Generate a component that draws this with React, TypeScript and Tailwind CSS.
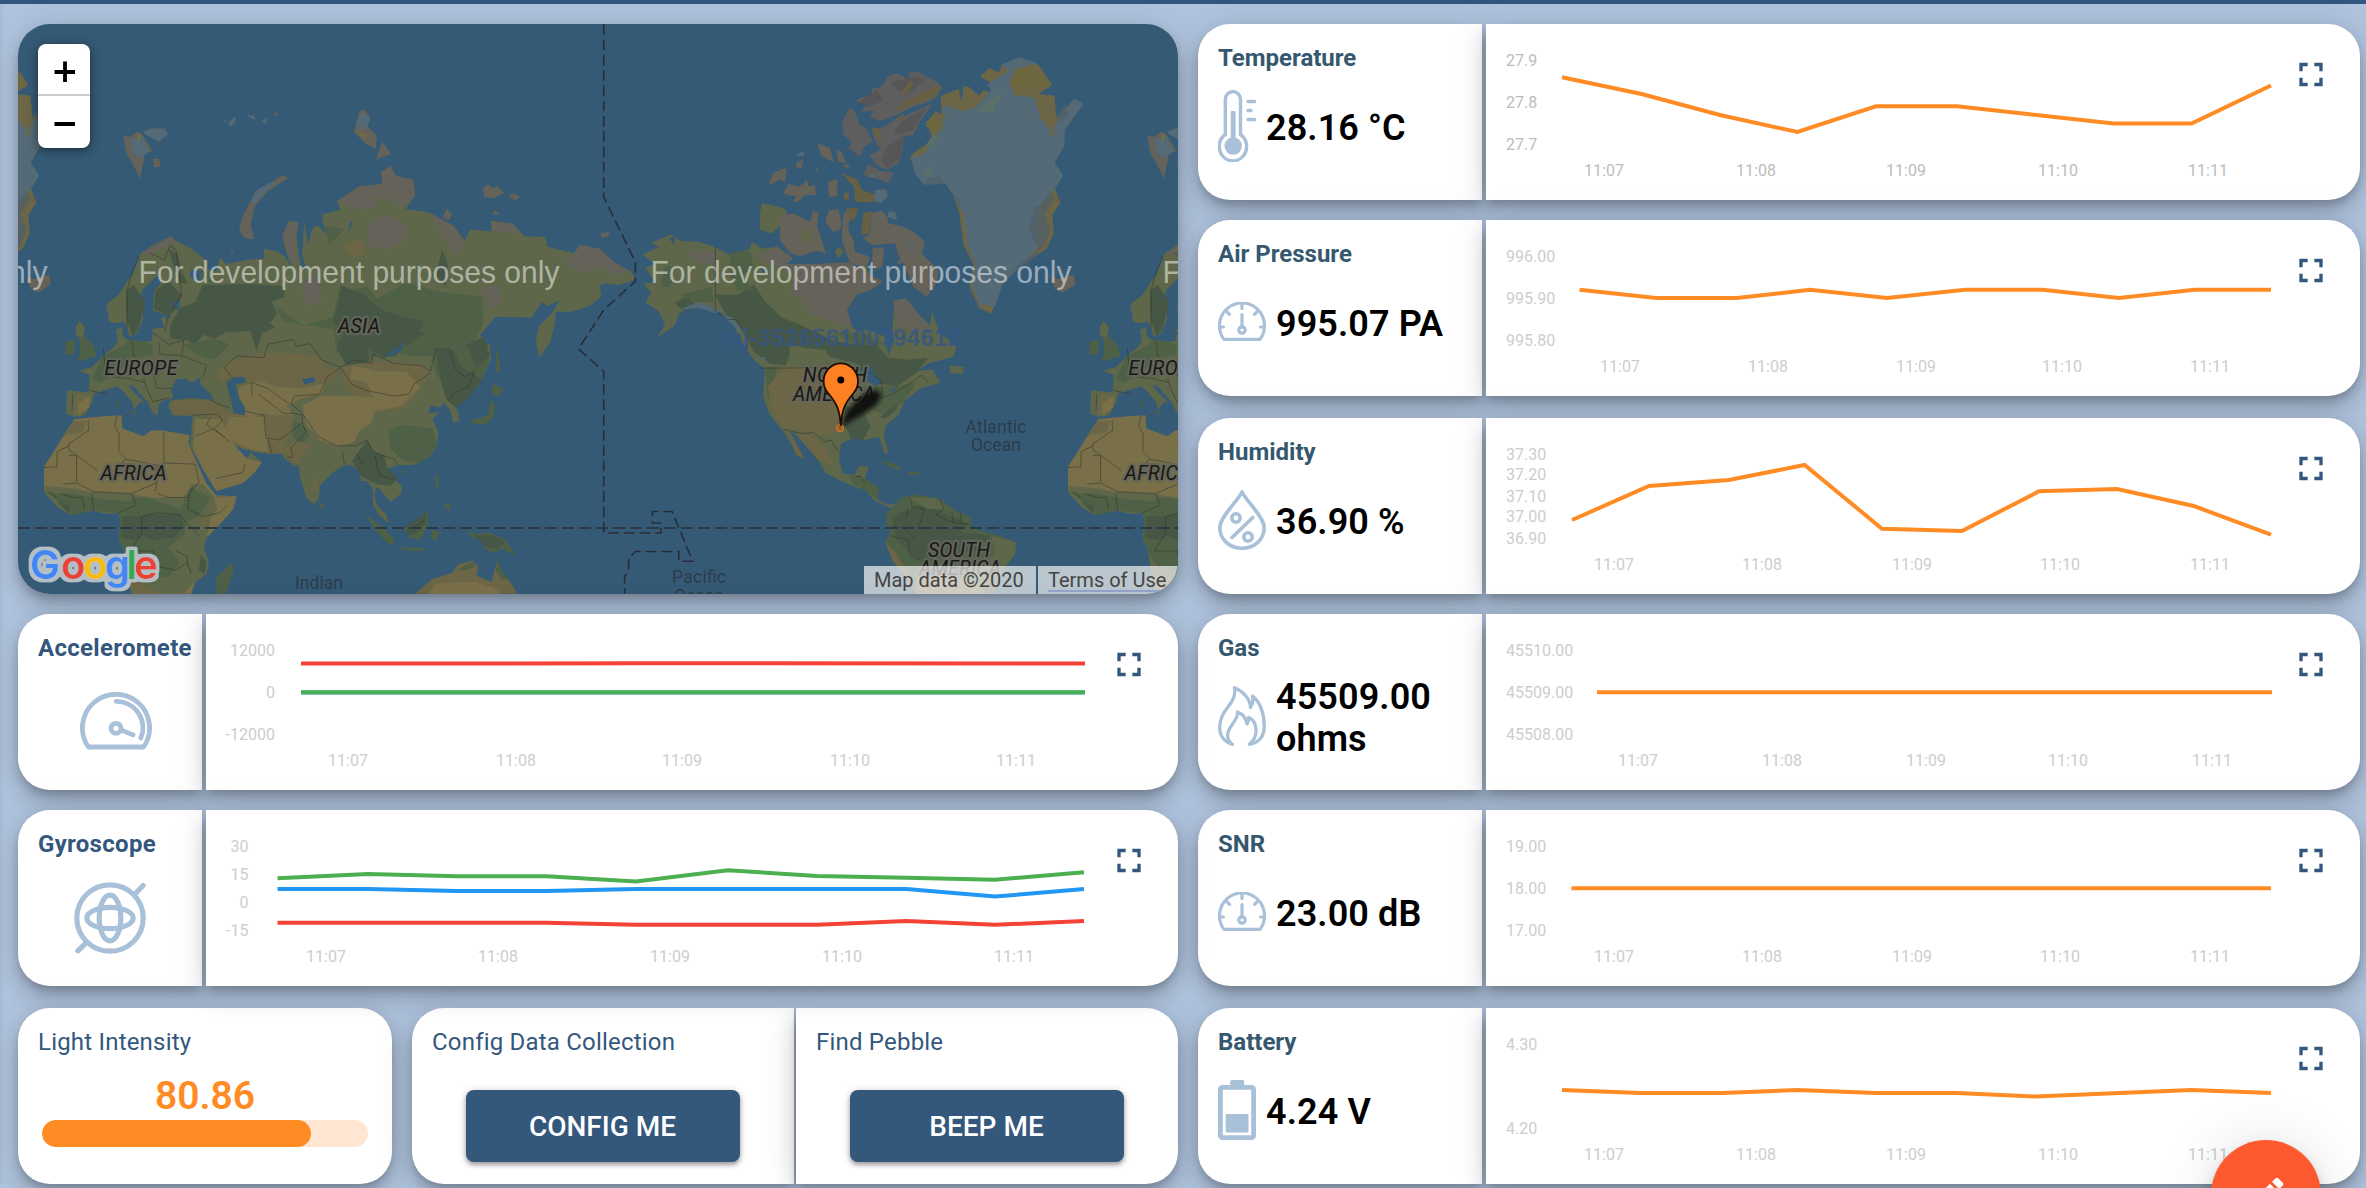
import React from "react";

const STEEL = "#a9c0d9";
const ORANGE = "#ff8b25";

const cardShadow =
  "shadow-[0_6px_10px_-2px_rgba(0,0,0,0.2),0_12px_20px_0_rgba(0,0,0,0.14),0_2px_36px_0_rgba(0,0,0,0.12)]";

/* ---------- icons ---------- */

function Thermometer() {
  return (
    <svg width="38" height="72" viewBox="0 0 38 72" fill="none" stroke={STEEL} strokeWidth="3.4" strokeLinecap="round">
      <path d="M7.3 44.5V9.6a7.6 8 0 0 1 15.2 0V44.5A13.7 14.4 0 1 1 7.3 44.5Z" />
      <rect x="12.8" y="21" width="4.8" height="30" rx="1" fill={STEEL} stroke="none" />
      <circle cx="15.2" cy="56" r="8.7" fill={STEEL} stroke="none" />
      <path d="M30 11.5H36.5M30 20.5H33M30 29.5H36.5" strokeWidth="3.4" />
    </svg>
  );
}

function Gauge() {
  return (
    <svg width="48" height="40" viewBox="0 0 48 40" fill="none" stroke={STEEL} strokeWidth="3.2" strokeLinecap="round" strokeLinejoin="round">
      <path d="M6 37.4A22.5 22.8 0 1 1 42 37.4Z" />
      <path d="M24 2.5V6.5M2.5 25H5.5M42.5 25H45.5M9 9.8L11.5 12.3M39 9.8L36.5 12.3M24 12.5V24" />
      <circle cx="24" cy="28" r="3.2" />
    </svg>
  );
}

function Drop() {
  return (
    <svg width="48" height="60" viewBox="0 0 48 60" fill="none" stroke={STEEL} strokeWidth="3.6" strokeLinecap="round" strokeLinejoin="round">
      <path d="M24 2C19 12 1.8 27 1.8 37.5C1.8 49.5 11.500 58.200 24 58.200S46.200 49.500 46.200 37.500C46.200 27 29 12 24 2Z" />
      <circle cx="18" cy="28" r="4.2" />
      <circle cx="30" cy="47" r="4.2" />
      <path d="M34.8 27.5L14 47.5" />
    </svg>
  );
}

function Flame() {
  return (
    <svg width="48" height="60" viewBox="0 0 48 60" fill="none" stroke={STEEL} strokeWidth="3.3" strokeLinecap="round" strokeLinejoin="round">
      <path d="M14.5 58.3C6 56 1.7 49.5 1.7 41.5C1.7 30 8 24 12.5 17.5C16.5 11.5 17.5 7 16.5 1.7C25 5 32 12.5 32.5 21.5C34.5 18.5 35.5 14.5 34.5 10C42 15.5 46.3 28 46.3 40C46.3 50 41 56.5 31.5 58.3C36.5 54 38.5 48.5 38 43C37.5 37.5 35 33 30.5 31.5C31 34 30.5 36 29 38C28 32 25 28 19.5 26C20.5 35 9.5 40 9.6 49.5C9.7 53 11.500 56.500 14.500 58.300Z" />
    </svg>
  );
}

function Battery() {
  return (
    <svg width="38" height="60" viewBox="0 0 38 60">
      <rect x="12.2" width="14" height="8" rx="1.5" fill={STEEL} />
      <rect x="2.4" y="7.4" width="33.2" height="50.2" rx="2" fill="none" stroke={STEEL} strokeWidth="4.8" />
      <rect x="7.7" y="34" width="22.8" height="18.5" rx="1" fill={STEEL} />
    </svg>
  );
}

function Speedometer() {
  return (
    <svg width="72" height="58" viewBox="0 0 72 58" fill="none" stroke={STEEL} strokeWidth="4.8" strokeLinecap="round" strokeLinejoin="round">
      <path d="M8.400 55A33.600 33.600 0 1 1 63.600 55Z" />
      <path d="M36.300 9.400A26.300 26.300 0 0 1 60.800 46M42 38.400L53 42.900" />
      <circle cx="36" cy="36.300" r="5" />
    </svg>
  );
}

function GyroIcon() {
  return (
    <svg width="72" height="72" viewBox="0 0 72 72" fill="none" stroke={STEEL} strokeWidth="5.2" strokeLinecap="round">
      <circle cx="36" cy="36" r="33.200" />
      <ellipse cx="36" cy="36" rx="10.800" ry="22.800" />
      <ellipse cx="36" cy="36" rx="23.200" ry="10.600" />
      <path d="M69 3.500L61 12M3.800 68.800L12.500 60.500" />
    </svg>
  );
}

function FullscreenButton() {
  return (
    <button className="absolute top-[30px] right-[29px] flex size-10 items-center justify-center">
      <svg width="41" height="41" viewBox="0 0 24 24" fill="#33577d">
        <path d="M7 14H5v5h5v-2H7v-3zm-2-4h2V7h3V5H5v5zm12 7h-3v2h5v-5h-2v3zM14 5v2h3v3h2V5h-5z" />
      </svg>
    </button>
  );
}

/* ---------- charts ---------- */

type Series = { color: string; points: string };
type Label = { text: string; y: number };

function Chart(props: {
  width: number;
  labels: Label[];
  labelX?: number;
  anchor?: "start" | "end";
  times: number[];
  series: Series[];
  dark?: boolean;
}) {
  const { width, labels, labelX = 20, anchor = "start", times, series, dark } = props;
  const fill = dark ? "#bcbcbc" : "#cdcdcd";
  return (
    <svg className="block" width={width} height="176" viewBox={`0 0 ${width} 176`} fontFamily="Roboto, sans-serif" fontSize="16">
      {labels.map((l) => (
        <text key={l.text} x={labelX} y={l.y} textAnchor={anchor} fill={fill}>
          {l.text}
        </text>
      ))}
      {times.map((x, i) => (
        <text key={x} x={x} y="152" textAnchor="middle" fill={fill}>
          {["11:07", "11:08", "11:09", "11:10", "11:11"][i]}
        </text>
      ))}
      {series.map((s) => (
        <polyline key={s.color} points={s.points} fill="none" stroke={s.color} strokeWidth="4" />
      ))}
    </svg>
  );
}

const three = (a: string, b: string, c: string): Label[] => [
  { text: a, y: 42 },
  { text: b, y: 84 },
  { text: c, y: 126 },
];

/* ---------- cards ---------- */

function SensorCard(props: { title: string; value: string; icon: React.ReactNode; chart: React.ReactNode; className?: string }) {
  return (
    <section className={`flex h-[176px] shrink-0 gap-1 ${props.className ?? ""}`}>
      <div className={`w-[284px] rounded-l-[32px] bg-white pt-5 pl-5 ${cardShadow}`}>
        <h2 className="text-[24px] leading-7 font-bold text-[#35586f]">{props.title}</h2>
        <div className="mt-3 flex h-[84px] items-center gap-[10px]">
          <div className="shrink-0">{props.icon}</div>
          <p className="pt-[3px] text-[36px] leading-[42px] font-semibold tracking-[0.1px] text-black">{props.value}</p>
        </div>
      </div>
      <div className={`relative w-[874px] rounded-r-[32px] bg-white ${cardShadow}`}>
        {props.chart}
        <FullscreenButton />
      </div>
    </section>
  );
}

function MotionCard(props: { title: string; icon: React.ReactNode; chart: React.ReactNode; className?: string }) {
  return (
    <section className={`flex h-[176px] shrink-0 gap-1 ${props.className ?? ""}`}>
      <div className={`w-[184px] rounded-l-[32px] bg-white pt-5 pl-5 ${cardShadow}`}>
        <h2 className="w-[153px] overflow-hidden text-[24px] leading-7 font-bold tracking-[0.3px] text-[#33577d]">{props.title}</h2>
        {props.icon}
      </div>
      <div className={`relative w-[972px] rounded-r-[32px] bg-white ${cardShadow}`}>
        {props.chart}
        <FullscreenButton />
      </div>
    </section>
  );
}

function ActionCard(props: { title: string; action: string; className: string }) {
  return (
    <div className={`w-[382px] bg-white pt-5 ${cardShadow} ${props.className}`}>
      <h2 className="pl-5 text-[24px] leading-7 tracking-[0.2px] text-[#33577d]">{props.title}</h2>
      <button className="mt-[34px] ml-[54px] flex h-[72px] w-[274px] items-center justify-center rounded-lg bg-[#34577c] pt-0.5 pr-px text-[28px] font-medium text-white shadow-[0_3px_4px_rgba(0,0,0,0.3),0_1px_8px_rgba(0,0,0,0.18)]">
        {props.action}
      </button>
    </div>
  );
}

/* ---------- map ---------- */

const C = {
  ocean: "#355a75",
  land: "#5e6749",
  mid: "#4e6045",
  forest: "#465745",
  desert: "#79704a",
  steppe: "#6c6647",
  tundra: "#646259",
  ice: "#546a76",
};

/* Europe, Asia and Africa */
function OldWorld() {
  return (
    <g>
      <path
        fill={C.land}
        d="M445 618L465 632L500 650L545 685L540 710L500 705L495 722L520 738L527 700L565 710L575 672L590 690L640 680L690 675L690 650L720 655L745 670L765 705L745 650L738 615L755 578L780 580L775 610L780 660L787 695L800 705L790 665L795 575L800 610L806 640L815 600L830 588L860 620L845 590L842 560L890 548L880 525L940 487L1000 480L995 450L1020 434L1035 460L1080 470L1085 510L1060 547L1120 555L1185 590L1215 630L1228 600L1285 605L1282 577L1340 585L1370 617L1425 620L1430 645L1500 662L1515 640L1568 650L1603 685L1650 710L1660 730L1619 745L1580 740L1567 745L1572 775L1540 800L1516 808L1490 815L1452 815L1450 840L1440 890L1410 935L1400 890L1410 850L1440 822L1462 785L1430 800L1415 790L1390 830L1295 828L1255 875L1270 905L1280 898L1283 940L1260 990L1230 1030L1210 1035L1182 1050L1198 1078L1200 1100L1185 1105L1175 1070L1160 1052L1150 1065L1125 1060L1120 1080L1150 1077L1130 1095L1145 1130L1143 1165L1120 1195L1080 1215L1040 1215L1015 1225L1025 1245L1050 1270L1048 1290L1020 1312L1000 1287L985 1272L978 1290L985 1320L1010 1345L1015 1368L990 1345L975 1320L975 1280L960 1258L945 1258L935 1225L915 1215L895 1218L870 1235L837 1268L832 1305L820 1318L800 1300L785 1250L780 1215L770 1218L745 1200L735 1185L700 1185L660 1180L612 1160L605 1145L590 1150L600 1170L620 1190L645 1198L655 1182L685 1208L665 1235L635 1262L565 1283L555 1265L530 1225L510 1190L497 1165L500 1135L503 1088L450 1085L440 1060L445 1048L500 1040L560 1045L545 1030L520 1010L525 985L500 1000L485 990L460 995L447 1020L455 1038L425 1048L415 1055L412 1085L400 1080L385 1050L350 1010L335 1005L345 1020L378 1052L365 1052L350 1070L345 1050L320 1020L305 1010L270 1020L245 1030L240 1055L220 1085L195 1090L173 1080L175 1020L225 1025L232 1020L235 980L205 968L240 960L270 930L300 905L308 890L303 862L318 855L322 880L335 890L395 893L400 870L398 860L430 855L420 830L445 825L400 812L403 760L420 740L412 720L395 735L370 760L368 800L375 830L360 870L340 880L325 840L305 845L285 840L278 795L310 770L350 710L365 665L400 640Z"
      />
      {/* northern forest */}
      <path fill={C.forest} d="M445 850L470 805L510 790L530 745L640 742L740 748L745 775L710 790L725 820L705 845L720 855L685 870L670 918L655 865L590 868L560 885L530 875L510 900L490 890L445 885ZM405 760L440 735L475 770L465 805L440 825L403 808ZM440 650L465 665L475 710L490 740L470 740L455 700ZM330 760L350 745L380 790L360 865L345 878L330 830Z" />
      <path fill={C.mid} d="M885 760L960 750L985 780L1060 740L1160 765L1260 775L1262 850L1240 890L1280 940L1250 1010L1200 1055L1180 1015L1140 980L1130 930L1070 930L1010 915L960 945L880 920L870 860L740 840L720 800L790 850L870 830Z" />
      <path fill={C.forest} d="M890 745L950 770L1000 810L1060 830L1110 840L1090 870L1060 880L1035 930L1000 935L960 905L965 945L905 955L880 910L900 870L870 840L885 790ZM1140 915L1185 915L1205 960L1260 990L1225 1040L1190 1065L1165 1040L1150 990ZM1220 900L1265 880L1280 930L1245 960ZM1140 720L1155 650L1170 690L1165 750ZM975 1180L1005 1190L1010 1220L1040 1250L1020 1270L985 1265L945 1245L920 1205L960 1150ZM990 860L1060 850L1110 870L1060 905Z" />
      <path fill={C.mid} d="M270 930L330 900L335 885L400 900L395 930L340 935L310 970L260 1000L240 990ZM480 900L560 885L600 900L560 940L520 930ZM1015 1125L1050 1110L1130 1120L1143 1165L1100 1210L1050 1200L1020 1170ZM765 1095L800 1120L810 1140L780 1165L765 1140ZM520 735L530 690L560 740ZM1150 800L1250 790L1220 860L1160 850ZM640 1120L650 1130L640 1140ZM850 590L900 600L860 640Z" />
      {/* tundra */}
      <path fill={C.tundra} d="M880 525L940 487L1000 480L995 450L1020 434L1035 460L1080 470L1085 510L1050 545L1020 520L985 515L985 540L940 550ZM738 615L755 578L780 580L770 640L780 700L755 670ZM960 590L1010 560L1065 590L1060 630L1010 655L960 640ZM1120 555L1185 590L1215 640L1190 670L1160 620ZM1285 577L1340 585L1360 610L1290 605ZM1470 680L1500 662L1515 640L1568 650L1603 685L1650 710L1620 720L1560 700L1520 715ZM370 660L445 618L465 635L420 650L390 670ZM785 740L830 720L840 790L800 800ZM1255 750L1300 745L1310 790L1280 810Z" />
      {/* steppe and desert */}
      <path fill={C.steppe} d="M565 975L600 940L640 935L700 920L770 925L830 930L850 960L890 965L860 1000L790 1010L720 1035L700 1010L650 1000L600 985L575 1000ZM890 960L990 945L1100 950L1130 975L1100 1010L1085 1035L1060 1065L1000 1075L960 1060L900 1010ZM450 1045L530 1045L580 1060L610 1100L580 1100L500 1080L455 1085ZM200 1030L235 1035L225 1080L195 1085ZM900 635L945 628L960 655L935 675L905 660ZM500 1110L610 1080L700 1080L770 1090L740 1185L700 1185L640 1175L580 1150L510 1160ZM740 1180L770 1150L810 1165L775 1215ZM815 1245L830 1250L822 1290Z" />
      <path fill={C.desert} d="M625 1010L680 995L720 1010L780 1015L850 1000L840 1030L790 1040L750 1060L765 1085L720 1085L690 1080L650 1095L620 1060ZM790 1060L840 1035L930 1035L975 1040L960 1000L915 990L920 955L985 970L1060 970L1100 1010L1050 1060L980 1075L970 1105L940 1125L925 1155L880 1165L835 1150L800 1110ZM510 1095L575 1095L590 1120L600 1135L610 1160L645 1198L685 1208L665 1235L635 1262L565 1283L530 1225L505 1175ZM600 1090L690 1090L700 1180L660 1175L610 1155L590 1115ZM205 1055L235 1035L232 1065L205 1085Z" />
      {/* inland waters */}
      <path fill={C.ocean} d="M592 1000L610 985L640 985L640 1000L615 1005L625 1040L640 1065L640 1085L612 1080L605 1055ZM447 1020L460 992L485 990L500 1005L520 1000L555 1035L530 1045L490 1035L455 1042ZM790 992L820 985L825 998L795 1004ZM1008 925L1045 905L1052 885L1050 915L1015 932ZM448 792L472 785L465 812ZM915 578L922 580L908 615ZM430 835L448 820L445 830Z" />
      {/* Africa */}
      <path
        fill={C.desert}
        d="M195 1095L270 1088L318 1085L320 1120L375 1140L395 1125L425 1125L495 1137L493 1160L515 1210L540 1265L565 1295L618 1297L610 1330L575 1370L540 1405L532 1430L545 1470L540 1500L510 1520L500 1552L345 1552L335 1520L330 1470L325 1440L310 1410L315 1360L310 1340L280 1342L240 1335L185 1345L150 1325L115 1285L115 1220L150 1165L165 1140Z"
      />
      <path fill={C.land} d="M115 1270L180 1275L240 1285L330 1290L400 1300L480 1300L500 1265L530 1265L560 1300L585 1310L550 1355L540 1405L532 1430L545 1470L540 1500L510 1520L480 1552L400 1552L335 1520L325 1440L310 1410L315 1360L310 1340L280 1342L240 1335L185 1345L150 1325L115 1285Z" />
      <path fill={C.mid} d="M130 1290L190 1290L260 1305L330 1310L360 1300L400 1305L470 1330L500 1275L550 1300L520 1350L490 1360L480 1400L440 1430L470 1470L440 1510L380 1500L340 1470L325 1440L310 1410L315 1360L310 1340L240 1335L185 1345Z" />
      <path fill={C.forest} d="M320 1350L370 1350L400 1345L470 1345L480 1375L455 1405L400 1412L375 1400L350 1412L318 1405ZM150 1310L180 1320L180 1342ZM525 1450L540 1470L535 1500L520 1490Z" />
      <path fill={C.steppe} d="M345 1552L330 1510L380 1530L420 1552ZM165 1140L195 1100L225 1100L215 1130ZM525 1350L550 1345L520 1400ZM565 1295L618 1297L600 1325L540 1340L575 1310Z" />
      <path fill={C.desert} d="M560 1302L618 1297L605 1330L570 1340Z" />
      {/* islands */}
      <path fill={C.mid} d="M608 1470L610 1495L590 1551L565 1551L565 1510L580 1495ZM205 882L222 878L245 905L252 930L205 945L210 915ZM170 895L195 885L195 925L172 928ZM1225 1100L1275 1085L1283 1045L1293 1058L1290 1090L1272 1108L1240 1108ZM1288 1003L1318 1018L1298 1037L1285 1025ZM1298 900L1304 935L1308 965L1296 978ZM1138 1240L1146 1242L1145 1275L1138 1270ZM1160 1318L1180 1318L1172 1337ZM1055 1380L1090 1362L1117 1333L1118 1370L1100 1410L1070 1405ZM953 1340L985 1368L1003 1378L1030 1412L1028 1424L1010 1418L980 1385ZM1035 1428L1070 1432L1112 1432L1105 1440L1060 1438ZM1130 1385L1152 1390L1140 1412L1125 1408ZM1218 1385L1240 1395L1280 1392L1320 1410L1335 1430L1350 1452L1310 1435L1290 1446L1265 1435L1265 1415L1235 1405ZM835 1312L848 1322L842 1330L833 1325ZM305 1045L312 1065L304 1062ZM335 1073L355 1078L352 1086ZM1210 1115L1218 1112L1214 1122ZM1050 1232L1065 1230L1058 1240Z" />
      <path fill={C.forest} d="M1060 1375L1115 1340L1110 1370L1090 1395L1065 1398ZM1240 1398L1285 1400L1320 1418L1300 1435L1270 1430Z" />
      <path fill={C.land} d="M208 838L222 855L218 880L200 880L198 855Z" />
      <path fill={C.tundra} d="M70 722L85 730L130 718L132 742L100 765L80 755ZM625 605L632 570L650 535L668 500L740 458L753 465L700 500L665 540L655 590L665 625L640 622ZM322 355L340 358L358 345L372 350L398 395L380 400L366 467L345 425L330 400ZM400 415L415 415L420 435L402 438ZM925 345L940 290L953 287L968 310L960 330L985 355L982 388L955 375ZM983 418L998 370L1022 402ZM1262 490L1275 482L1290 492L1298 485L1318 505L1290 518L1265 515ZM1328 512L1345 505L1360 515L1345 524ZM1158 565L1168 545L1180 560L1175 575L1160 572ZM1285 560L1295 548L1304 562ZM714 302L724 290L726 302ZM603 655L613 660L605 663Z" />
      <path fill={C.ice} d="M372 345L395 335L430 335L439 350L415 370L385 355ZM340 365L370 355L390 395L365 415L350 400ZM655 530L668 500L700 480L720 475L690 505L668 530ZM930 320L945 295L965 305L958 335L940 340ZM642 300L665 303L668 315ZM595 325L612 306L618 312L605 330ZM683 318L697 305L697 325ZM582 318L592 310L590 318Z" />
      <path fill="#77703f" d="M358 348L368 350L362 380ZM930 345L960 350L955 362Z" opacity="0.8" />
      {/* Australia */}
      <path fill={C.steppe} d="M1085 1552L1130 1513L1180 1498L1197 1475L1235 1465L1250 1480L1245 1505L1285 1520L1300 1463L1312 1495L1330 1515L1352 1552Z" />
      <path fill={C.desert} d="M1120 1552L1140 1525L1240 1520L1290 1535L1310 1552Z" />
      <path fill={C.mid} d="M1190 1490L1235 1467L1245 1480L1215 1490ZM1296 1490L1300 1463L1312 1495L1330 1515L1310 1515Z" />
      {/* borders */}
      <g fill="none" stroke="#35342f" strokeWidth="2.4" opacity="0.6" strokeLinejoin="round">
        <path d="M365 668L345 710L332 760L332 860M390 660L430 680L445 640L460 655L475 770L450 808M585 960L620 930L690 935L700 900L765 887L775 905L810 898L840 940L890 960L925 940L970 950L975 925L1030 950L1100 955L1125 970L1140 912L1175 912L1190 965L1215 985L1240 970L1225 1010L1190 1025L1170 1050M890 960L920 1005L955 1020L1030 1035L1070 1030L1080 1005L1125 975M585 960L605 985M890 960L855 985L835 1030L770 1035L760 1055L790 1080L830 1140L880 1165L930 1165L960 1150L975 1180L1000 1190L1030 1200L1040 1215M658 1035L658 1000L700 1015L720 1030L755 1055M675 1030L740 1080L765 1080L790 1085L790 1105L730 1150L700 1145L710 1185M640 1075L690 1085L695 1145M790 1105L800 1130L760 1170L765 1195L750 1195" />
        <path d="M270 910L275 960L295 985L340 990L380 1000M345 895L350 930L375 950L420 960M415 895L418 925L475 930L480 890L440 900L400 870M475 930L540 955L530 985M400 975L410 1015L450 1015M375 990L385 1020L400 1050L440 1040M232 1020L280 1030M190 1030L188 1075M440 825L430 870M550 1045L580 1060L600 1065M505 1085L570 1082L580 1100L560 1120L510 1140M550 1090L540 1110L590 1145M560 1120L600 1155M565 1250L635 1235L640 1215M895 1180L900 1215M930 1185L950 1215M980 1190L990 1240L1030 1255" />
        <path d="M230 1098L232 1125L180 1160L180 1175L255 1230M305 1088L300 1115L312 1135L310 1180L330 1200L300 1225M428 1130L428 1210L510 1213M328 1200L410 1215L412 1250L405 1285M180 1165L150 1180L148 1220L115 1222M180 1190L200 1190L200 1262L165 1265M200 1262L245 1285L345 1290L412 1260M345 1290L355 1320L310 1340M412 1290L440 1300L490 1300L505 1270M510 1213L520 1260L495 1290L490 1330L530 1350L575 1340L595 1320M370 1350L410 1340L470 1345L490 1370L520 1400M370 1350L370 1395L340 1440L400 1440L410 1480L460 1490L490 1470L500 1500M460 1440L490 1455L490 1480M160 1290L190 1300L215 1300L220 1330M240 1290L245 1335M125 1285L150 1300M1075 1380L1110 1360" />
      </g>
    </g>
  );
}

function Greenland() {
  return (
    <g>
      <path
        fill={C.steppe}
        d="M848 450L835 410L865 395L890 355L875 320L900 290L915 300L912 250L958 232L965 265L970 225L985 228L1010 250L1020 235L1045 245L1038 215L1012 200L1035 178L1060 190L1066 170L1110 150L1160 170L1195 222L1160 245L1200 250L1205 310L1250 258L1273 272L1225 340L1225 380L1200 425L1222 460L1200 490L1215 530L1195 560L1198 610L1180 650L1120 690L1070 740L1058 770L1040 820L1010 805L985 750L995 690L970 640L960 560L945 510L925 480L870 482Z"
      />
      <path
        fill={C.ice}
        d="M848 455L838 412L850 405L880 385L905 350L925 300L912 290L925 275L965 290L1000 280L1040 235L1030 220L1055 205L1085 185L1065 170L1110 150L1158 165L1100 180L1085 215L1100 250L1150 255L1165 310L1190 340L1215 305L1250 258L1273 272L1225 340L1225 380L1200 425L1222 460L1190 510L1160 540L1150 600L1160 640L1120 690L1070 740L1050 800L1010 795L990 740L1000 690L980 640L970 560L945 510L925 480L870 482Z"
      />
      <path fill="#6f683d" d="M1090 225L1108 180L1165 182L1190 222L1150 235L1120 228ZM835 408L870 380L880 390L860 408ZM872 330L895 305L920 325L912 340ZM1180 330L1190 350L1205 315L1200 345L1190 360Z" opacity="0.9" />
      <path fill="#5c7166" d="M1000 290L1075 235L1050 270L1045 290ZM862 462L890 432L885 455ZM875 380L895 350L905 362L885 385Z" />
      <path fill="#4f6069" d="M1160 540L1190 500L1200 520L1175 560L1190 600L1175 640L1130 690L1080 715L1160 650L1135 600L1150 540ZM945 505L965 550L960 520ZM870 482L880 465L910 460L925 480ZM1205 300L1230 270L1235 300L1215 320Z" opacity="0.7" />
    </g>
  );
}

/* Canadian arctic islands */
function ArcticIslands() {
  return (
    <g>
      <path fill="#5f5e5f" d="M225 183L245 172L272 165L278 145L305 140L325 108L352 100L385 118L388 97L415 95L435 108L470 125L486 140L470 170L440 188L400 200L350 225L300 243L270 232L280 212L245 215L262 190ZM187 250L200 215L212 202L225 215L240 255L258 265L278 305L255 318L240 350L205 325L215 305L190 285ZM300 265L380 225L458 190L420 245L400 285L370 290L368 330L355 370L320 390L290 375L268 345L300 330L280 290L275 262ZM250 405L265 372L300 392L342 398L325 430L300 418Z" />
      <path fill="#545456" d="M330 130L400 110L440 115L400 150L370 165ZM360 250L440 200L400 270L340 285ZM320 320L368 290L362 350L320 388L305 360ZM230 190L290 150L310 180L270 200Z" opacity="0.8" />
      <path fill="#686042" d="M340 215L380 180L430 160L470 135L484 148L460 172L400 195ZM362 160L390 120L400 130L385 155L370 168ZM335 245L372 220L365 240ZM275 262L300 268L305 305L285 290ZM185 400L232 418L245 450L290 465L280 487L225 485L222 440ZM200 505L236 505L225 535L195 550ZM250 520L275 513L268 580L243 585ZM192 458L208 458L205 482L192 478Z" />
      <path fill={C.tundra} d="M112 308L150 325L162 368L122 345ZM170 330L185 335L198 370L175 365ZM192 372L210 374L205 383L192 380ZM48 370L70 358L65 385L50 385ZM0 385L20 390L15 425L0 418ZM10 458L25 432L55 440L72 430L80 418L85 438L105 435L107 465L75 465L55 485L38 488L48 468L20 466ZM143 425L172 418L172 468L148 472ZM108 378L115 392L108 392ZM0 520L20 512L22 525L40 520L90 545L98 515L115 515L112 560L138 640L110 632L60 648L30 640L0 600ZM135 545L148 510L175 508L180 528L185 550L180 570L160 575ZM190 520L210 515L205 570L220 600L225 635L270 650L260 685L210 670L185 600ZM275 520L305 512L322 530L325 550L370 560L400 575L435 605L425 640L475 690L470 730L440 770L400 740L380 690L355 645L345 610L275 615L250 595L270 580ZM278 625L310 622L312 645L305 680L285 690L275 665ZM355 660L368 658L362 672L352 672Z" />
      <path fill="#5e6749" d="M0 500L22 512L0 528ZM165 635L175 622L192 632L175 655ZM60 575L90 565L98 600L75 610Z" />
      <path fill={C.ice} d="M283 452L300 447L320 450L324 468L305 488L285 486ZM322 515L345 515L352 540L325 532ZM47 346L68 333L74 347ZM370 605L390 610L385 622ZM262 410L280 398L285 415Z" />
    </g>
  );
}

function Americas() {
  return (
    <g>
      <path
        fill={C.land}
        d="M158 665L200 645L180 635L230 612L255 630L300 632L340 645L380 668L430 650L435 632L460 650L500 645L540 675L520 690L600 690L680 686L700 700L720 690L735 720L765 735L740 755L700 770L675 810L690 860L740 865L770 880L780 930L795 890L790 865L795 785L825 780L855 820L885 850L890 815L910 870L952 905L945 932L880 950L850 970L890 965L912 1000L860 1015L820 1050L805 1085L775 1110L768 1140L780 1182L770 1185L757 1142L720 1150L690 1145L660 1160L655 1200L665 1238L695 1240L705 1218L730 1220L720 1250L755 1275L752 1305L775 1318L800 1318L785 1328L740 1305L725 1282L690 1270L660 1257L620 1235L598 1195L540 1130L522 1125L532 1150L567 1198L550 1190L520 1135L480 1085L463 1035L468 965L440 940L420 910L400 875L380 830L330 803L290 795L250 820L240 850L192 885L215 850L200 815L165 790L180 765L160 740L190 738L165 700L190 690Z"
      />
      <path fill={C.tundra} d="M440 665L500 650L540 675L520 690L600 690L680 686L735 720L765 735L740 755L700 770L675 810L688 855L640 840L580 820L560 780L530 770L545 710L480 690ZM270 660L340 655L345 690L300 690ZM792 785L825 780L855 820L900 870L850 865L800 850ZM420 780L455 790L450 820L425 800Z" />
      <path fill={C.forest} d="M340 770L400 770L440 745L470 790L510 830L560 850L640 890L690 900L750 900L780 935L830 940L880 935L850 975L800 1010L745 1000L700 950L620 930L540 900L520 955L480 950L440 920L420 880L375 830ZM670 1060L715 1070L735 1115L715 1150L685 1145L670 1110ZM760 1090L800 1050L820 1020L800 1070L770 1095ZM240 790L270 775L300 800L260 815Z" />
      <path fill={C.mid} d="M380 660L430 655L440 700L410 720L440 760L400 760L380 720ZM205 750L215 695L240 700L230 750ZM640 870L720 870L770 900L700 900ZM710 1010L790 1010L850 1000L820 1050L760 1080L715 1060ZM255 770L330 750L340 790L290 790ZM680 1240L720 1250L755 1275L752 1305L720 1280L690 1265ZM470 960L500 960L485 1010L500 1060L475 1040Z" />
      <path fill={C.steppe} d="M475 1010L520 960L600 960L660 1020L670 1100L650 1130L600 1140L550 1120L515 1118L485 1080ZM545 1130L590 1140L620 1170L640 1215L600 1200Z" />
      <path fill="#736641" d="M520 1125L530 1125L567 1198L548 1190ZM560 1000L600 1000L580 1020Z" opacity="0.8" />
      <path fill={C.land} d="M530 905L620 915L640 950L530 950ZM690 1030L720 1040L700 1060ZM455 560L460 530L500 540L525 570L485 610L455 600ZM935 955L970 960L968 978L935 975Z" />
      <path fill={C.tundra} d="M475 485L490 450L522 440L515 465ZM1195 720L1215 740L1250 720L1252 745L1220 765L1200 750ZM505 590L515 575L530 590L530 640L515 625ZM52 610L72 606L75 615L55 622Z" />
      <path fill={C.ice} d="M545 408L568 396L565 407ZM250 810L300 788L365 815L340 818L300 805ZM355 820L385 830L420 870L405 868ZM445 930L470 935L465 943Z" opacity="0.9" />
      <path fill={C.mid} d="M758 1205L790 1210L815 1225L800 1226L770 1212ZM830 1232L858 1235L860 1242L830 1240Z" />
      {/* South America */}
      <path
        fill={C.mid}
        d="M775 1340L800 1320L810 1300L850 1293L910 1303L950 1335L988 1350L990 1380L1060 1400L1103 1418L1100 1450L1060 1500L1050 1552L850 1552L840 1520L790 1465L772 1415L785 1390L775 1375Z"
      />
      <path fill={C.forest} d="M790 1350L850 1320L900 1330L940 1350L985 1370L960 1390L1040 1400L1000 1440L940 1450L870 1470L840 1450L800 1410Z" />
      <path fill={C.land} d="M830 1300L900 1303L930 1330L880 1330ZM1040 1400L1103 1418L1100 1450L1060 1500L1050 1552L1000 1552L1020 1480L1050 1440Z" />
      <path fill={C.steppe} d="M772 1415L795 1440L850 1530L850 1552L830 1515L790 1465Z" />
      <path fill={C.desert} d="M850 1552L850 1510L900 1500L1000 1520L1030 1552Z" />
      <path fill={C.ocean} d="M700 965L735 955L750 985L765 1000L745 1010L720 990ZM775 1025L800 1012L800 1020ZM455 700L475 705L465 715ZM225 622L240 618L238 640Z" />
      <g fill="none" stroke="#35342f" strokeWidth="2.2" opacity="0.65" strokeLinejoin="round">
        <path d="M342 645L342 812L375 835L395 835L415 870M458 962L520 962L700 960L735 975L762 995L765 1040L790 1030L830 1005L865 980L880 1000M515 1122L560 1133L590 1130L620 1155L635 1150L655 1182M695 1245L710 1245L720 1262M835 1300L840 1325L870 1330L862 1360L855 1385M910 1305L920 1330L900 1345L940 1365L985 1370M790 1375L820 1380L850 1410M785 1400L830 1410L835 1450L860 1465M940 1340L945 1365M962 1340L965 1368M825 1350L830 1330" />
      </g>
    </g>
  );
}

function WorldMap() {
  return (
    <div className="relative h-[570px] shrink-0 overflow-hidden rounded-[32px] bg-[#355a75]">
      <svg className="block" width="1160" height="570" viewBox="18 24 1160 570" fontFamily="Roboto, sans-serif">
        <defs>
          <filter id="soft" x="-30%" y="-30%" width="160%" height="160%">
            <feGaussianBlur stdDeviation="2" />
          </filter>
          <filter id="outline" x="-10%" y="-30%" width="120%" height="160%">
            <feMorphology in="SourceAlpha" operator="dilate" radius="3" result="grown" />
            <feGaussianBlur in="grown" stdDeviation="1.2" result="round" />
            <feComponentTransfer in="round" result="edge">
              <feFuncA type="linear" slope="3" intercept="-0.6" />
            </feComponentTransfer>
            <feFlood floodColor="#b3bfc4" />
            <feComposite in2="edge" operator="in" result="halo" />
            <feMerge>
              <feMergeNode in="halo" />
              <feMergeNode in="SourceGraphic" />
            </feMerge>
          </filter>
        </defs>
        <g transform="scale(0.38265)">
          <OldWorld />
        </g>
        <g transform="translate(1024 0) scale(0.38265)">
          <OldWorld />
        </g>
        <g transform="translate(580 0) scale(0.3954 0.38265)">
          <Americas />
          <Greenland />
        </g>
        <g transform="translate(780 40) scale(0.33333)">
          <ArcticIslands />
        </g>
        <g transform="translate(-444 0) scale(0.3954 0.38265)">
          <Greenland />
        </g>

        <path d="M18 528H1178" stroke="#2b3947" strokeWidth="1.8" strokeDasharray="12 5" fill="none" />
        <g transform="translate(580 0) scale(0.3954 0.38265)" fill="none" stroke="#272d38" strokeWidth="4" strokeDasharray="28 12">
          <path d="M60 63V515L140 685V735L60 810L-4 912L60 970V1393H205V1367H183V1337H233L285 1467H250V1441H140L123 1460V1495L113 1505V1552" />
        </g>

        <g fontSize="32" fontFamily="'Liberation Sans', Arial, sans-serif" fill="#ffffff" fillOpacity="0.5">
          {[-373.5, 138.5, 650.5, 1162.5].map((x) => (
            <text key={x} x={x} y="282.500" textLength="421" lengthAdjust="spacingAndGlyphs">
              For development purposes only
            </text>
          ))}
        </g>

        <g
          fontSize="19.5"
          fontStyle="italic"
          textAnchor="middle"
          fill="#161915"
          stroke="#65655c"
          strokeOpacity="0.85"
          strokeWidth="4.5"
          strokeLinejoin="round"
          paintOrder="stroke"
        >
          <text x="359" y="332.500" textLength="42">ASIA</text>
          <text x="141" y="375" textLength="73">EUROPE</text>
          <text x="1165" y="375" textLength="73">EUROPE</text>
          <text x="133.500" y="480" textLength="66">AFRICA</text>
          <text x="1157.500" y="480" textLength="66">AFRICA</text>
          <text x="835" y="381.500" textLength="64">NORTH</text>
          <text x="834" y="401" textLength="82">AMERICA</text>
          <text x="959" y="557" textLength="62">SOUTH</text>
          <text x="960" y="575" textLength="82">AMERICA</text>
        </g>
        <g fontSize="17.5" fill="#2c3c4c" textAnchor="middle">
          <text x="996" y="433" textLength="61">Atlantic</text>
          <text x="996" y="451" textLength="50">Ocean</text>
          <text x="319" y="589" textLength="48">Indian</text>
          <text x="699" y="583" textLength="54">Pacific</text>
          <text x="699" y="602" textLength="50">Ocean</text>
        </g>

        <text x="721.500" y="346" textLength="239" fontFamily="'Liberation Sans', Arial, sans-serif" fontWeight="700" fontSize="23.5" fill="#345688" fillOpacity="0.8">
          mj-352656100794612
        </text>

        {/* marker */}
        <path d="M841 428C843 414 853 402 866 393C875 387 883 390 880 399C876 410 852 418 841 428Z" fill="#0c0f0c" opacity="0.95" filter="url(#soft)" />
        <circle cx="840" cy="428" r="3.6" fill="#a0602c" stroke="#ff8b25" strokeWidth="1" strokeOpacity="0.7" />
        <path d="M840.800 426C840 410 836.500 403 828 393A17.200 17.800 0 1 1 853.600 393C845 403 841.600 410 840.800 426Z" fill="#ff7f23" stroke="#1a0e05" strokeWidth="1.8" />
        <circle cx="840.800" cy="380" r="3.5" fill="#000" />

        {/* map provider logo */}
        <text y="578.500" fontSize="40" fontWeight="600" fontFamily="Inter, sans-serif" filter="url(#outline)">
          <tspan x="30" fill="#4285f4">G</tspan>
          <tspan x="61" fill="#ea4335">o</tspan>
          <tspan x="83" fill="#fbbc05">o</tspan>
          <tspan x="105" fill="#4285f4">g</tspan>
          <tspan x="126.500" fill="#34a853">l</tspan>
          <tspan x="134" fill="#ea4335">e</tspan>
        </text>
      </svg>

      <div className="absolute top-5 left-5 flex h-[104px] w-[52px] flex-col overflow-hidden rounded-lg bg-white shadow-[0_2px_10px_rgba(0,0,0,0.5)]">
        <button className="flex h-[52px] items-center justify-center border-b-2 border-[#ccc] pt-1.5 pl-0.5">
          <svg width="22" height="22" viewBox="0 0 22 22">
            <path d="M11 0.500V21M0.500 11H21" stroke="#000" strokeWidth="3.8" />
          </svg>
        </button>
        <button className="flex h-[52px] items-center justify-center pt-1 pl-0.5">
          <svg width="22" height="22" viewBox="0 0 22 22">
            <path d="M0.500 11H21" stroke="#000" strokeWidth="4" />
          </svg>
        </button>
      </div>

      <div className="absolute right-0 bottom-0 flex h-7 gap-0.5 text-[20px] leading-7 text-[#444]">
        <span className="w-[172px] bg-[#f5f5f5]/70 pl-[10px] whitespace-nowrap">Map data ©2020</span>
        <span className="w-[140px] bg-[#f5f5f5]/70 pl-[10px] whitespace-nowrap">
          <span className="inline-block h-[26px] w-[118px] border-b-2 border-[#92a3cc] leading-7">Terms of Use</span>
        </span>
      </div>
    </div>
  );
}

/* ---------- page ---------- */

const T_NARROW = [118, 270, 420, 572, 722];
const T_MID = [128, 276, 426, 574, 724];

export default function App() {
  return (
    <div className="relative h-[1188px] w-[2366px] overflow-hidden bg-[#b0c4de] font-['Roboto',sans-serif]">
      <header className="h-1 bg-[#31567f]" />
      <main className="flex gap-5 pt-5 pr-[6px] pl-[18px] shadow-[inset_5px_0_6px_-5px_rgba(0,0,0,0.1)]">
        <div className="flex w-[1160px] flex-col">
          <div className={`rounded-[32px] ${cardShadow}`}>
            <WorldMap />
          </div>
          <MotionCard
            className="mt-5"
            title="Accelerometer"
            icon={<div className="mt-[29.5px] ml-[42px]"><Speedometer /></div>}
            chart={
              <Chart
                width={972}
                labelX={69}
                anchor="end"
                labels={three("12000", "0", "-12000")}
                times={[142, 310, 476, 644, 810]}
                series={[
                  { color: "#f44336", points: "95,49.5 430,49.3 879,49.5" },
                  { color: "#2196f3", points: "95,78.5 879,78.5" },
                  { color: "#4caf50", points: "95,78.2 879,78.2" },
                ]}
              />
            }
          />
          <MotionCard
            className="mt-5"
            title="Gyroscope"
            icon={<div className="mt-6 ml-9"><GyroIcon /></div>}
            chart={
              <Chart
                width={972}
                labelX={42.5}
                anchor="end"
                labels={[
                  { text: "30", y: 42 },
                  { text: "15", y: 70 },
                  { text: "0", y: 98 },
                  { text: "-15", y: 126 },
                ]}
                times={[120, 292, 464, 636, 808]}
                series={[
                  { color: "#f44336", points: "71.5,112.8 340.5,112.8 430,114.8 611,114.8 700.5,111 789,114.8 878,111" },
                  { color: "#2196f3", points: "71.5,79 162,79 251,81 340.5,81 430,79 700.5,79 789,86.6 878,79" },
                  { color: "#4caf50", points: "71.5,68.2 162,64 251,66.3 340.5,66.3 430,71.6 521.8,60.3 611,66 700.5,67.8 789,69.7 878,62.2" },
                ]}
              />
            }
          />
          <div className="mt-[22px] flex h-[176px] gap-5">
            <section className={`w-[374px] rounded-[32px] bg-white px-5 pt-5 ${cardShadow}`}>
              <h2 className="text-[24px] leading-7 tracking-[0.2px] text-[#33577d]">Light Intensity</h2>
              <p className="mt-[17px] text-center text-[39px] leading-[47px] font-semibold text-[#ff8b25]">80.86</p>
              <div className="mx-1 h-[27px] overflow-hidden rounded-full bg-[#fee6d3]">
                <div className="h-full w-[269px] rounded-full bg-[#ff8b25]" />
              </div>
            </section>
            <section className="flex gap-0.5">
              <ActionCard title="Config Data Collection" action="CONFIG ME" className="rounded-l-[32px]" />
              <ActionCard title="Find Pebble" action="BEEP ME" className="rounded-r-[32px]" />
            </section>
          </div>
        </div>

        <div className="flex w-[1162px] flex-col">
          <SensorCard
            title="Temperature"
            value="28.16 °C"
            icon={<Thermometer />}
            chart={
              <Chart
                dark
                width={874}
                labels={three("27.9", "27.8", "27.7")}
                times={T_NARROW}
                series={[{ color: ORANGE, points: "76,53.3 155.6,70 234,91 311.4,108 390,82.3 471,82.3 627.5,99.5 705.5,99.5 785,61.5" }]}
              />
            }
          />
          <SensorCard
            className="mt-5"
            title="Air Pressure"
            value="995.07 PA"
            icon={<Gauge />}
            chart={
              <Chart
                width={874}
                labels={three("996.00", "995.90", "995.80")}
                times={[134, 282, 430, 576, 724]}
                series={[{ color: ORANGE, points: "93.6,69.8 170,78 251,78 324,69.8 401,78 479,69.8 556.7,69.8 632.8,78 708.6,69.8 785,69.8" }]}
              />
            }
          />
          <SensorCard
            className="mt-[22px]"
            title="Humidity"
            value="36.90 %"
            icon={<Drop />}
            chart={
              <Chart
                width={874}
                labels={[
                  { text: "37.30", y: 42 },
                  { text: "37.20", y: 62 },
                  { text: "37.10", y: 84 },
                  { text: "37.00", y: 104 },
                  { text: "36.90", y: 126 },
                ]}
                times={T_MID}
                series={[{ color: ORANGE, points: "86,102 163,68 242.8,62 318.6,47 396,110.7 476,113 553,73.3 631,71 707.8,88 785,116.7" }]}
              />
            }
          />
          <SensorCard
            className="mt-5"
            title="Gas"
            value="45509.00 ohms"
            icon={<Flame />}
            chart={
              <Chart
                width={874}
                labels={three("45510.00", "45509.00", "45508.00")}
                times={[152, 296, 440, 582, 726]}
                series={[{ color: ORANGE, points: "111,78.3 786,78.3" }]}
              />
            }
          />
          <SensorCard
            className="mt-5"
            title="SNR"
            value="23.00 dB"
            icon={<Gauge />}
            chart={
              <Chart
                width={874}
                labels={three("19.00", "18.00", "17.00")}
                times={T_MID}
                series={[{ color: ORANGE, points: "85.5,78.3 785,78.3" }]}
              />
            }
          />
          <SensorCard
            className="mt-[22px]"
            title="Battery"
            value="4.24 V"
            icon={<Battery />}
            chart={
              <Chart
                width={874}
                labels={[
                  { text: "4.30", y: 42 },
                  { text: "4.20", y: 126 },
                ]}
                times={T_NARROW}
                series={[{ color: ORANGE, points: "76,82 154,85 236,85 311.4,82 390,85 471,85 550,88.5 705.5,82 785,85" }]}
              />
            }
          />
        </div>
      </main>

      <button className="absolute top-[1140px] left-[2211px] flex size-[110px] items-center justify-center rounded-full bg-[#ff5930] shadow-[0_6px_10px_-2px_rgba(0,0,0,0.2),0_12px_20px_0_rgba(0,0,0,0.14),0_2px_60px_0_rgba(0,0,0,0.12)]">
        <svg width="46" height="46" viewBox="0 0 24 24" fill="#fff">
          <path d="M3 17.250V21h3.750L17.810 9.940l-3.750-3.750L3 17.250zM20.710 7.040c.390-.390.390-1.020 0-1.410l-2.340-2.340c-.390-.390-1.020-.390-1.410 0l-1.830 1.830 3.750 3.750 1.830-1.830z" />
        </svg>
      </button>
    </div>
  );
}
